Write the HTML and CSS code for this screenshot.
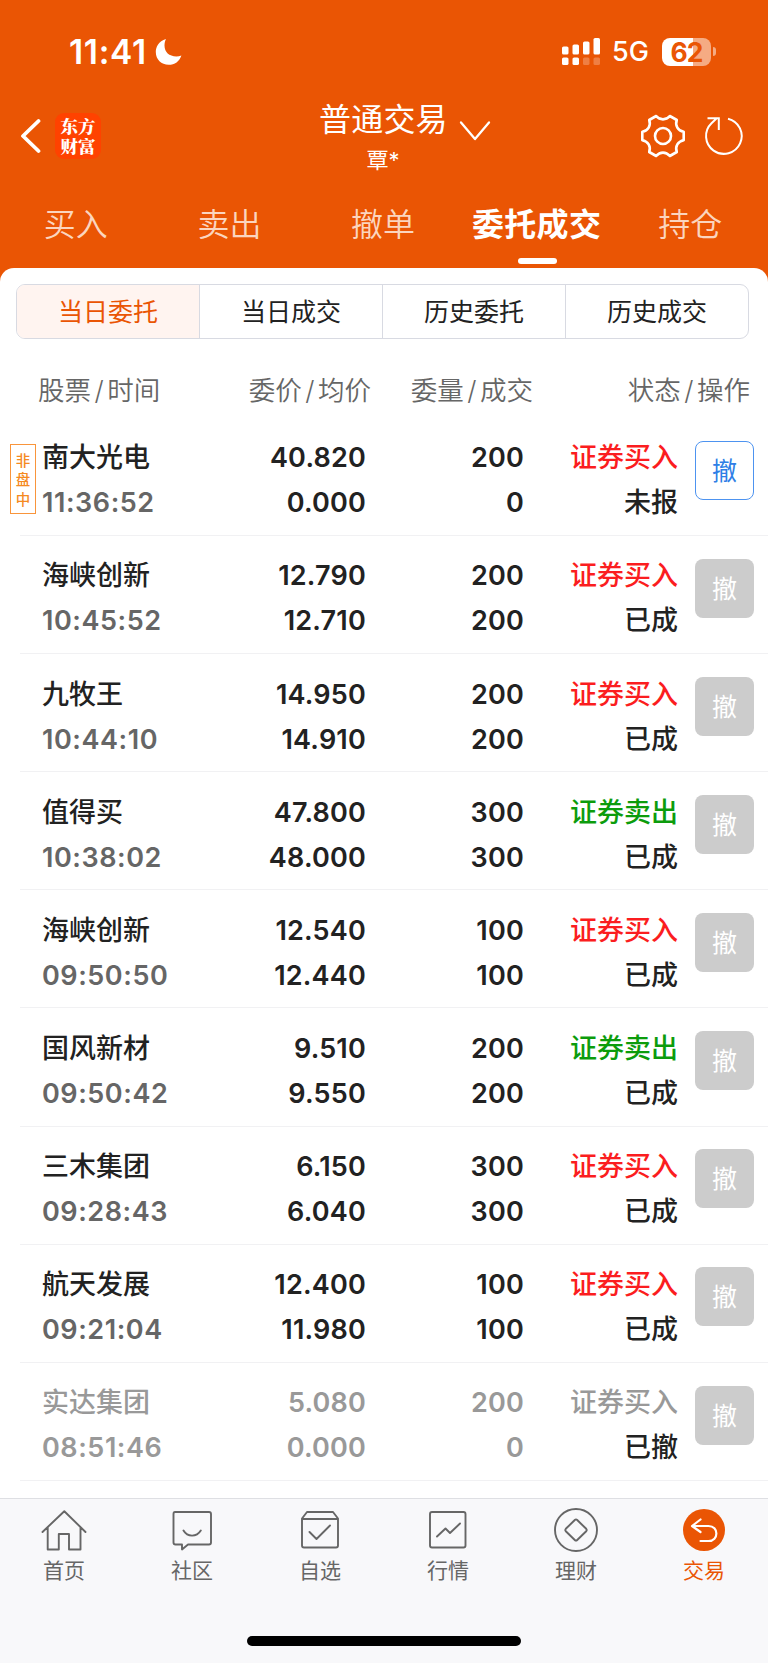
FILE: index.html
```html
<!DOCTYPE html>
<html lang="zh-CN">
<head>
<meta charset="utf-8">
<title>委托成交</title>
<link rel="stylesheet" href="styles.css">
</head>
<body>
<div class="app">
  <header class="top">
    <div class="status">
      <span class="clock">11:41</span>
      <svg class="moon" width="27" height="28" viewBox="0 0 27 28"><path d="M11 1C3.500 3 .8 9 .8 14c0 7.500 5.500 12.800 12.900 12.800 6 0 10.800-3.300 12.700-9.300-1.500.6-3.300.9-5 .9C14 18.400 9.500 14 9.500 7.500c0-2.500.5-4.600 1.500-6.500z" fill="#fff"/></svg>
      <svg class="signal" width="40" height="28" viewBox="0 0 40 28" fill="#fff"><rect x="1" y="8.500" width="6.500" height="8" rx="1.600"/><rect x="11.500" y="6.500" width="6.500" height="10" rx="1.600"/><rect x="22" y="3.500" width="6.500" height="13" rx="1.600"/><rect x="32.500" y="0" width="6.500" height="16.500" rx="1.600"/><rect x="1" y="19.500" width="6.500" height="7.500" rx="1.600"/><rect x="11.500" y="19.500" width="6.500" height="7.500" rx="1.600"/><rect x="22" y="19.500" width="6.500" height="7.500" rx="1.600" opacity=".25"/><rect x="32.500" y="19.500" width="6.500" height="7.500" rx="1.600" opacity=".25"/></svg>
      <span class="net">5G</span>
      <span class="battery">62</span><span class="cap"></span>
    </div>
    <div class="bar">
      <svg class="back" width="21" height="36" viewBox="0 0 21 36"><path d="M18.500 3 3 18l15.500 15" fill="none" stroke="#fff" stroke-width="3.800" stroke-linecap="round" stroke-linejoin="round"/></svg>
      <span class="logo">东方财富</span>
      <div class="heading">
        <div class="title">普通交易</div>
        <div class="sub">覃*</div>
      </div>
      <svg class="down" width="32" height="22" viewBox="0 0 32 22"><path d="M2 2.500 16 19 30 2.500" fill="none" stroke="#fff" stroke-width="2.300" stroke-linecap="round" stroke-linejoin="round"/></svg>
      <svg class="gear" width="46" height="46" viewBox="-23 -23 46 46" fill="none" stroke="#fff" stroke-width="2.600" stroke-linejoin="round"><path d="M-6.800-20C-3-15.500 3-15.500 6.800-20L13.800-16C11.800-10.400 14.900-5.200 20.700-4.200V4.200C14.900 5.200 11.800 10.400 13.800 16L6.800 20C3 15.500-3 15.500-6.800 20L-13.800 16C-11.800 10.400-14.900 5.200-20.700 4.200V-4.200C-14.900-5.200-11.800-10.400-13.800-16Z"/><circle r="8"/></svg>
      <svg class="reload" width="42" height="42" viewBox="-21 -21 42 42" fill="none" stroke="#fff" stroke-width="2"><path d="M4-17.300A17.800 17.800 0 1 1-12.500-12.800L-7.500-17.500M-16.500-17.800H-5.200V-6"/></svg>
    </div>
    <nav class="tabs">
      <span>买入</span><span>卖出</span><span>撤单</span><span class="on">委托成交</span><span>持仓</span>
    </nav>
  </header>
  <main class="sheet">
    <div class="seg"><span class="on">当日委托</span><span>当日成交</span><span>历史委托</span><span>历史成交</span></div>
    <div class="head"><span>股票<i>/</i>时间</span><span>委价<i>/</i>均价</span><span>委量<i>/</i>成交</span><span>状态<i>/</i>操作</span></div>
    <div class="list">
      <div class="row"><span class="tag">非<br>盘<br>中</span><div class="c"><p>南大光电</p><p class="time">11:36:52</p></div><div class="c"><p>40.820</p><p>0.000</p></div><div class="c"><p>200</p><p>0</p></div><div class="c"><p class="buy">证券买入</p><p>未报</p></div><span class="btn live">撤</span></div>
      <div class="row"><div class="c"><p>海峡创新</p><p class="time">10:45:52</p></div><div class="c"><p>12.790</p><p>12.710</p></div><div class="c"><p>200</p><p>200</p></div><div class="c"><p class="buy">证券买入</p><p>已成</p></div><span class="btn">撤</span></div>
      <div class="row"><div class="c"><p>九牧王</p><p class="time">10:44:10</p></div><div class="c"><p>14.950</p><p>14.910</p></div><div class="c"><p>200</p><p>200</p></div><div class="c"><p class="buy">证券买入</p><p>已成</p></div><span class="btn">撤</span></div>
      <div class="row"><div class="c"><p>值得买</p><p class="time">10:38:02</p></div><div class="c"><p>47.800</p><p>48.000</p></div><div class="c"><p>300</p><p>300</p></div><div class="c"><p class="sell">证券卖出</p><p>已成</p></div><span class="btn">撤</span></div>
      <div class="row"><div class="c"><p>海峡创新</p><p class="time">09:50:50</p></div><div class="c"><p>12.540</p><p>12.440</p></div><div class="c"><p>100</p><p>100</p></div><div class="c"><p class="buy">证券买入</p><p>已成</p></div><span class="btn">撤</span></div>
      <div class="row"><div class="c"><p>国风新材</p><p class="time">09:50:42</p></div><div class="c"><p>9.510</p><p>9.550</p></div><div class="c"><p>200</p><p>200</p></div><div class="c"><p class="sell">证券卖出</p><p>已成</p></div><span class="btn">撤</span></div>
      <div class="row"><div class="c"><p>三木集团</p><p class="time">09:28:43</p></div><div class="c"><p>6.150</p><p>6.040</p></div><div class="c"><p>300</p><p>300</p></div><div class="c"><p class="buy">证券买入</p><p>已成</p></div><span class="btn">撤</span></div>
      <div class="row"><div class="c"><p>航天发展</p><p class="time">09:21:04</p></div><div class="c"><p>12.400</p><p>11.980</p></div><div class="c"><p>100</p><p>100</p></div><div class="c"><p class="buy">证券买入</p><p>已成</p></div><span class="btn">撤</span></div>
      <div class="row void"><div class="c"><p>实达集团</p><p class="time">08:51:46</p></div><div class="c"><p>5.080</p><p>0.000</p></div><div class="c"><p>200</p><p>0</p></div><div class="c"><p>证券买入</p><p class="state">已撤</p></div><span class="btn">撤</span></div>
    </div>
  </main>
  <footer class="dock">
    <nav class="nav">
      <div class="item"><svg viewBox="-23 -23 46 46"><path d="M-21.500 2 .3-18.800 21.500 2M-16.300-2.500V19.500H-5.200V4H5V19.500H16.500V-2.500"/></svg>首页</div>
      <div class="item"><svg viewBox="-23 -23 46 46"><path d="M-17-18H17Q19-18 19-16V12.500Q19 14.500 17 14.500H-4L-10 19.500V14.500H-16.500Q-18.500 14.500-18.500 12.500V-16Q-18.500-18-17-18ZM-8.500.5C-4.500 7.300 4.500 7.300 8.800.5"/></svg>社区</div>
      <div class="item"><svg viewBox="-23 -23 46 46"><path d="M-18-11.500-13-18H13L18-11.500V15.500Q18 17.500 16 17.500H-16Q-18 17.500-18 15.500ZM-18-11H18M-10.500 2-3.500 9 10-4.500"/></svg>自选</div>
      <div class="item"><svg viewBox="-23 -23 46 46"><rect x="-18" y="-18" width="35.500" height="35.500" rx="2"/><path d="M-11 6.500-2.500-1.500 2 3 12-6.500"/></svg>行情</div>
      <div class="item"><svg viewBox="-23 -23 46 46"><circle r="21"/><path d="M-1.200-10Q0-11.200 1.200-10L10.200-1.200Q11.200 0 10.200 1.200L1.200 10Q0 11.200-1.200 10L-10.200 1.200Q-11.200 0-10.200-1.200Z"/></svg>理财</div>
      <div class="item on"><svg viewBox="-23 -23 46 46"><circle r="21" fill="#ea5504" stroke="none"/><path stroke="#fff" stroke-width="2.200" d="M-3.500-10.500-12-4-3.500 2M-12-4H4.500C15-4 15 11 4.500 11H-3.500"/></svg>交易</div>
    </nav>
    <div class="homebar"></div>
  </footer>
</div>
</body>
</html>
```
FILE: styles.css
```css
* { box-sizing: border-box; }
body { margin: 0; font-family: Inter, "Noto Sans CJK SC", sans-serif; color: #222; background: #fff; }
p { margin: 0; }
svg { display: block; flex: none; }
.app { width: 768px; height: 1663px; display: flex; flex-direction: column; background: #ea5504; overflow: hidden; }
.top { height: 268px; flex: none; color: #fff; }
.status { height: 103px; display: flex; align-items: center; padding-left: 69px; }
.clock { font-size: 33.500px; font-weight: 600; letter-spacing: .7px; width: 86px; flex: none; }
.signal { margin-left: 379px; }
.net { font-size: 27px; font-weight: 500; margin-left: 11px; width: 38px; line-height: 30px; padding-top: 1px; }
.battery { margin-left: 12px; width: 49px; height: 28px; border-radius: 8px; background: linear-gradient(90deg, #fff 31px, #f5ab83 31px); color: #ea5504; font-size: 26.500px; font-weight: 700; line-height: 28px; text-align: center; letter-spacing: -1px; }
.cap { width: 3px; height: 9px; margin-left: 2px; border-radius: 0 4px 4px 0; background: #f5ab83; }
.bar { height: 75px; display: grid; grid-template-rows: 66px; grid-template-columns: 55px 46px 218px 128px 12px 32px 149px 46px 17px 42px; align-items: center; }
.back { margin-left: 20px; }
.logo { width: 46px; height: 46px; border-radius: 9px; background: #ff4200; font: 900 17.500px/19.500px "Noto Serif CJK SC", "Noto Sans CJK SC", serif; text-align: center; padding: 3px 5px 0; word-break: break-all; }
.heading { grid-column: 4; align-self: start; margin-top: -3px; text-align: center; white-space: nowrap; }
.title { font-size: 32px; line-height: 40px; letter-spacing: .2px; }
.sub { font-size: 22px; line-height: 40px; }
.down { grid-column: 6; align-self: start; margin-top: 17px; }
.gear { grid-column: 8; }
.reload { grid-column: 10; }
.tabs { height: 90px; display: grid; grid-template-columns: repeat(5, 1fr); text-align: center; font-size: 32px; line-height: 93px; color: #fbd5bf; font-weight: 350; margin-left: -1px; width: 768px; }
.tabs .on { color: #fff; font-weight: 600; position: relative; letter-spacing: .3px; }
.tabs .on::after { content: ""; position: absolute; left: 58px; top: 80px; width: 39px; height: 6px; border-radius: 3px; background: #fff; }
.sheet { flex: 1; background: #fff; border-radius: 14px 14px 0 0; padding-top: 16px; }
.seg { margin: 0 19px 0 16px; height: 55px; display: grid; grid-template-columns: 182px 183px 183px 1fr; border: 1.500px solid #d8dae2; border-radius: 9px; overflow: hidden; font-size: 25px; line-height: 54px; text-align: center; }
.seg span + span { border-left: 1.500px solid #d8dae2; }
.seg .on { background: #fff4f0; color: #ea5504; }
.head { height: 79px; display: grid; grid-template-columns: 160px 173px 162px 217px; padding-left: 38px; font-size: 26.500px; line-height: 103px; color: #666; font-weight: 350; text-align: right; white-space: nowrap; }
.head span:first-child { text-align: left; }
.head i { font-style: normal; padding: 0 3.500px; }
.row { position: relative; height: 118.100px; display: grid; grid-template-columns: 170px 154px 158px 154px 59px; padding: 17.400px 0 0 42px; font-size: 27px; line-height: 45px; font-weight: 500; text-align: right; }
.row::after { content: ""; position: absolute; left: 20px; right: 0; bottom: 0; height: 1px; background: #f1f1f3; }
.c:first-child, .tag + .c { text-align: left; }
.c { font-weight: 600; letter-spacing: .2px; }
.c:first-child, .tag + .c, .c:nth-last-child(2) { font-weight: 500; letter-spacing: 0; }
.row .time { color: #666; font-weight: 600; letter-spacing: .55px; }
.buy { color: #fb1d20; }
.sell { color: #0c9c0c; }
.btn { width: 59px; height: 59px; margin: 5.400px 0 0 17px; border-radius: 8px; background: #ccc; color: #fff; font-size: 25px; font-weight: 400; line-height: 60px; text-align: center; }
.live { background: #fff; border: 1.500px solid #4d93f0; color: #2f7fe6; line-height: 58px; }
.void, .row.void .time { color: #999; }
.void .state { color: #222; }
.tag { position: absolute; left: 10px; top: 26px; width: 26px; height: 70px; border: 1.500px solid #f9953b; color: #f58a1f; font-size: 14.500px; line-height: 19.300px; font-weight: 500; text-align: center; padding-top: 6px; }
.dock { height: 165px; flex: none; background: #f8f8fa; border-top: 1px solid #dedfe3; }
.nav { display: grid; grid-template-columns: repeat(6, 1fr); padding-top: 8px; height: 137px; }
.item { display: flex; flex-direction: column; align-items: center; font-size: 21px; line-height: 36px; color: #666; font-weight: 400; }
.item svg { width: 46px; height: 46px; fill: none; stroke: #666; stroke-width: 1.900; stroke-linejoin: round; stroke-linecap: round; }
.item.on { color: #ea5504; }
.homebar { width: 274px; height: 10px; border-radius: 5px; background: #000; margin: 0 auto; }
```
